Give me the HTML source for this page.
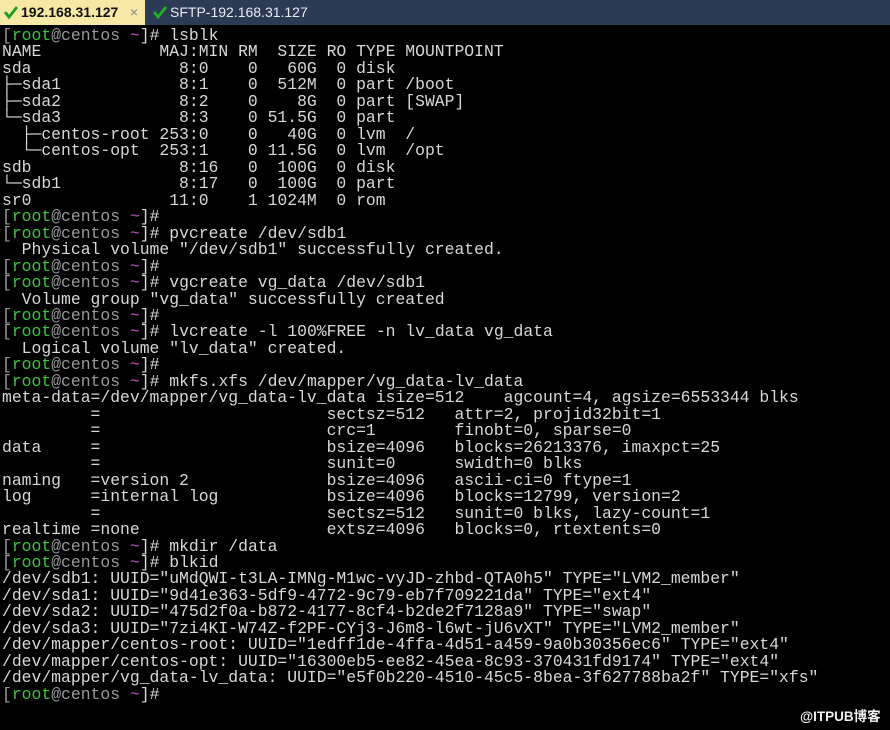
<!DOCTYPE html>
<html><head><meta charset="utf-8"><style>
html,body{margin:0;padding:0;background:#000;width:890px;height:730px;overflow:hidden}
.bar{position:absolute;left:0;top:0;width:890px;height:25px;background:#2b3a55;font-family:"Liberation Sans",sans-serif;font-size:14px}
.t1{position:absolute;left:0;top:0;width:145px;height:25px;background:#f7e8a6;color:#111;font-weight:bold}
.t2{position:absolute;left:148px;top:0;height:25px;color:#e8ecf4}
.ck{position:absolute;top:4px;width:16px;height:16px}
.lbl{position:absolute;top:4px;white-space:nowrap}
pre{position:absolute;left:2px;top:28px;margin:0;font-family:"Liberation Mono","DejaVu Sans Mono",monospace;font-size:16.4px;line-height:16.47px;color:#d8d8d8}
.g{color:#3ec43e}.b{color:#9a9a9a}.m{color:#c050c0}
.wm{position:absolute;left:800px;top:705px;color:#f0f0f0;font-family:"Liberation Sans","Noto Sans CJK SC",sans-serif;font-weight:bold;font-size:13.5px}
</style></head><body>
<div class="bar">
<div class="t1"><svg class="ck" style="left:3px" viewBox="0 0 16 16"><path d="M2 8 L6 13 L14 3" stroke="#20a020" stroke-width="3" fill="none"/></svg><span class="lbl" style="left:21px">192.168.31.127</span><span class="lbl" style="left:130px;color:#888;font-weight:normal">×</span></div>
<div class="t2"><svg class="ck" style="left:4px" viewBox="0 0 16 16"><path d="M2 8 L6 13 L14 3" stroke="#20b020" stroke-width="3" fill="none"/></svg><span class="lbl" style="left:22px">SFTP-192.168.31.127</span></div>
</div>
<pre><span class="b">[</span><span class="g">root</span><span class="b">@centos </span><span class="m">~</span>]# lsblk
NAME            MAJ:MIN RM  SIZE RO TYPE MOUNTPOINT
sda               8:0    0   60G  0 disk
├─sda1            8:1    0  512M  0 part /boot
├─sda2            8:2    0    8G  0 part [SWAP]
└─sda3            8:3    0 51.5G  0 part
  ├─centos-root 253:0    0   40G  0 lvm  /
  └─centos-opt  253:1    0 11.5G  0 lvm  /opt
sdb               8:16   0  100G  0 disk
└─sdb1            8:17   0  100G  0 part
sr0              11:0    1 1024M  0 rom
<span class="b">[</span><span class="g">root</span><span class="b">@centos </span><span class="m">~</span>]#
<span class="b">[</span><span class="g">root</span><span class="b">@centos </span><span class="m">~</span>]# pvcreate /dev/sdb1
  Physical volume "/dev/sdb1" successfully created.
<span class="b">[</span><span class="g">root</span><span class="b">@centos </span><span class="m">~</span>]#
<span class="b">[</span><span class="g">root</span><span class="b">@centos </span><span class="m">~</span>]# vgcreate vg_data /dev/sdb1
  Volume group "vg_data" successfully created
<span class="b">[</span><span class="g">root</span><span class="b">@centos </span><span class="m">~</span>]#
<span class="b">[</span><span class="g">root</span><span class="b">@centos </span><span class="m">~</span>]# lvcreate -l 100%FREE -n lv_data vg_data
  Logical volume "lv_data" created.
<span class="b">[</span><span class="g">root</span><span class="b">@centos </span><span class="m">~</span>]#
<span class="b">[</span><span class="g">root</span><span class="b">@centos </span><span class="m">~</span>]# mkfs.xfs /dev/mapper/vg_data-lv_data
meta-data=/dev/mapper/vg_data-lv_data isize=512    agcount=4, agsize=6553344 blks
         =                       sectsz=512   attr=2, projid32bit=1
         =                       crc=1        finobt=0, sparse=0
data     =                       bsize=4096   blocks=26213376, imaxpct=25
         =                       sunit=0      swidth=0 blks
naming   =version 2              bsize=4096   ascii-ci=0 ftype=1
log      =internal log           bsize=4096   blocks=12799, version=2
         =                       sectsz=512   sunit=0 blks, lazy-count=1
realtime =none                   extsz=4096   blocks=0, rtextents=0
<span class="b">[</span><span class="g">root</span><span class="b">@centos </span><span class="m">~</span>]# mkdir /data
<span class="b">[</span><span class="g">root</span><span class="b">@centos </span><span class="m">~</span>]# blkid
/dev/sdb1: UUID="uMdQWI-t3LA-IMNg-M1wc-vyJD-zhbd-QTA0h5" TYPE="LVM2_member"
/dev/sda1: UUID="9d41e363-5df9-4772-9c79-eb7f709221da" TYPE="ext4"
/dev/sda2: UUID="475d2f0a-b872-4177-8cf4-b2de2f7128a9" TYPE="swap"
/dev/sda3: UUID="7zi4KI-W74Z-f2PF-CYj3-J6m8-l6wt-jU6vXT" TYPE="LVM2_member"
/dev/mapper/centos-root: UUID="1edff1de-4ffa-4d51-a459-9a0b30356ec6" TYPE="ext4"
/dev/mapper/centos-opt: UUID="16300eb5-ee82-45ea-8c93-370431fd9174" TYPE="ext4"
/dev/mapper/vg_data-lv_data: UUID="e5f0b220-4510-45c5-8bea-3f627788ba2f" TYPE="xfs"
<span class="b">[</span><span class="g">root</span><span class="b">@centos </span><span class="m">~</span>]#</pre>
<div class="wm">@ITPUB博客</div>
</body></html>
